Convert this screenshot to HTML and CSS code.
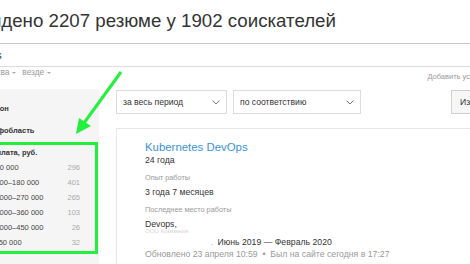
FILE: index.html
```html
<!DOCTYPE html>
<html lang="ru">
<head>
  <meta charset="UTF-8">
  <title>Найдено 2207 резюме</title>
  <link rel="stylesheet" href="styles.css">
</head>
<body>
  <div class="page">
    <h1 class="title">Найдено 2207 резюме у 1902 соискателей</h1>

    <div class="search"><span class="query">DevOps</span></div>

    <div class="search-opts">
      <span class="opt">Москва</span>
      <span class="opt">везде</span>
      <span class="add">Добавить условие</span>
    </div>

    <div class="layout">
      <div class="sidebar">
        <div class="filter-title">Регион</div>
        <div class="filter-title">Профобласть</div>

        <div class="filter salary">
          <div class="filter-title">Зарплата, руб.</div>
          <div class="row"><span>до 90 000</span><span class="count">296</span></div>
          <div class="row"><span>90 000–180 000</span><span class="count">401</span></div>
          <div class="row"><span>180 000–270 000</span><span class="count">265</span></div>
          <div class="row"><span>270 000–360 000</span><span class="count">103</span></div>
          <div class="row"><span>360 000–450 000</span><span class="count">26</span></div>
          <div class="row"><span>от 450 000</span><span class="count">32</span></div>
        </div>
      </div>

      <div class="main">
        <div class="controls">
          <div class="select sel-period">за весь период <svg class="chev" viewBox="0 0 8 5"><polyline points="0.5,0.5 4,4 7.5,0.5"/></svg></div>
          <div class="select sel-order">по соответствию <svg class="chev" viewBox="0 0 8 5"><polyline points="0.5,0.5 4,4 7.5,0.5"/></svg></div>
          <div class="btn">Изменить</div>
        </div>

        <div class="card">
          <div class="card-title">Kubernetes DevOps</div>
          <div class="value">24 года</div>

          <div class="label">Опыт работы</div>
          <div class="value">3 года 7 месяцев</div>

          <div class="label second">Последнее место работы</div>
          <div class="value">Devops,</div>
          <div class="faint">ООО Компания</div>

          <div class="period"><span class="dot">.</span>Июнь 2019 — Февраль 2020</div>
          <div class="meta">Обновлено 23 апреля 10:59 &nbsp;•&nbsp; Был на сайте сегодня в 17:27</div>
        </div>
      </div>
    </div>
  </div>

  <svg class="arrow" viewBox="0 0 470 264" width="470" height="264">
    <line x1="121" y1="72" x2="84" y2="123" />
    <polygon points="76,134 79,118 91,126" />
  </svg>
</body>
</html>
```

FILE: styles.css
```css
:root {
  --text: #333;
  --muted: #999;
  --line: #dcdcdc;
  --link: #3a93dd;
  --marker: #22f03c;
}

body {
  margin: 0;
  overflow: hidden;
  background: #fff;
  font-family: "Liberation Sans", Arial, sans-serif;
  color: var(--text);
}

.page {
  margin-left: -36px;
  width: 600px;
}

.title {
  margin: 10px 0 0 3px;
  font-size: 18.7px;
  font-weight: normal;
  line-height: 22px;
  white-space: nowrap;
}

.search {
  margin-top: 11px;
  height: 24px;
  box-sizing: border-box;
  border: 1px solid var(--line);
  border-top-color: #c8c8c8;
  display: flex;
  align-items: center;
  font-size: 11px;
}

.query {
  margin-left: -3px;
}

.search-opts {
  display: flex;
  align-items: flex-start;
  padding-left: 17px;
  font-size: 8.3px;
  line-height: 11px;
  color: var(--muted);
}

.opt {
  margin-right: 6px;
}

.opt::after {
  content: "";
  display: inline-block;
  margin-left: 3px;
  vertical-align: middle;
  border-left: 2px solid transparent;
  border-right: 2px solid transparent;
  border-top: 2px solid #aaa;
}

.add {
  margin-left: auto;
  margin-top: 4px;
  margin-right: 73px;
  font-size: 7.5px;
  white-space: nowrap;
}

.layout {
  display: flex;
  margin-top: 7px;
}

.sidebar {
  flex-shrink: 0;
  width: 135px;
  min-height: 180px;
  box-sizing: border-box;
  padding: 14px 1px 0 19px;
  background: #f5f5f5;
  font-size: 7.5px;
}

.filter-title {
  font-weight: bold;
  line-height: 12px;
  margin-bottom: 10px;
  white-space: nowrap;
}

.salary {
  margin: -5px 0 0 -8px;
  padding: 0 15px 1px 5px;
  border: 3px solid var(--marker);
}

.salary .filter-title {
  line-height: 15px;
  margin-bottom: 0;
}

.row {
  display: flex;
  justify-content: space-between;
  line-height: 15px;
  padding-left: 2px;
  color: #444;
  white-space: nowrap;
}

.count {
  color: #aaa;
}

.main {
  flex: 1;
  min-width: 0;
  margin-left: 17px;
  padding-top: 1px;
}

.controls {
  display: flex;
  gap: 6px;
  height: 24px;
  font-size: 8.6px;
}

.select {
  flex-shrink: 0;
  box-sizing: border-box;
  border: 1px solid var(--line);
  padding: 0 6px;
  display: flex;
  align-items: center;
  justify-content: space-between;
  white-space: nowrap;
}

.sel-period {
  width: 111px;
}

.sel-order {
  width: 128px;
}

.chev {
  width: 8px;
  height: 5px;
  fill: none;
  stroke: #777;
  stroke-width: 1;
}

.btn {
  flex-shrink: 0;
  margin-left: 84px;
  box-sizing: border-box;
  border: 1px solid #d0d0d0;
  background: #f6f6f6;
  padding: 0 10px 0 8px;
  display: flex;
  align-items: center;
}

.card {
  margin-top: 14px;
  border: 1px solid #e6e6e6;
  border-right: none;
  padding: 11px 0 20px 28px;
  font-size: 8.7px;
}

.card-title {
  font-size: 11.4px;
  line-height: 14px;
  color: var(--link);
}

.value {
  line-height: 12px;
}

.label {
  margin-top: 7px;
  font-size: 7.3px;
  line-height: 10px;
  color: var(--muted);
}

.label + .value {
  margin-top: 3px;
}

.label.second {
  margin-top: 7px;
}

.faint {
  margin-top: -2px;
  font-size: 6px;
  line-height: 6px;
  color: #d4d4d4;
}

.period {
  margin-top: 2px;
  padding-left: 66px;
  line-height: 12px;
}

.dot {
  color: #bbb;
  margin-right: 4px;
}

.meta {
  line-height: 12px;
  color: var(--muted);
  white-space: nowrap;
}

.arrow {
  position: absolute;
  left: 0;
  top: 0;
  pointer-events: none;
}

.arrow line {
  stroke: var(--marker);
  stroke-width: 3;
}

.arrow polygon {
  fill: var(--marker);
}
```
